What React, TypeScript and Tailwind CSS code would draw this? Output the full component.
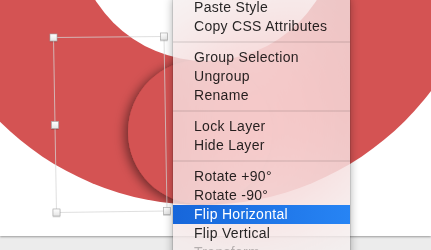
import React from 'react';

type MenuItem = { label: string; active?: boolean; disabled?: boolean } | 'sep';

const items: MenuItem[] = [
  { label: 'Paste Style' },
  { label: 'Copy CSS Attributes' },
  'sep',
  { label: 'Group Selection' },
  { label: 'Ungroup' },
  { label: 'Rename' },
  'sep',
  { label: 'Lock Layer' },
  { label: 'Hide Layer' },
  'sep',
  { label: 'Rotate +90°' },
  { label: 'Rotate -90°' },
  { label: 'Flip Horizontal', active: true },
  { label: 'Flip Vertical' },
  { label: 'Transform', disabled: true },
];

const RED = '#d45353';

// corner / edge handles of the (slightly rotated) selection frame
const handles: [number, number][] = [
  [53.5, 37.5],
  [164, 36.5],
  [55, 125],
  [56.5, 212.5],
  [167, 211],
];

const Artwork = () => (
  <svg width="431" height="236" viewBox="0 0 431 236" className="block">
    <defs>
      <clipPath id="ring">
        <circle cx="202" cy="-82" r="287" />
      </clipPath>
      <filter id="drop" x="-30%" y="-30%" width="160%" height="160%">
        <feDropShadow dx="-3" dy="2" stdDeviation="5.5" floodColor="#000" floodOpacity="0.5" />
      </filter>
      <filter id="hshadow" x="-50%" y="-50%" width="200%" height="200%">
        <feDropShadow dx="0" dy="0.5" stdDeviation="0.6" floodColor="#000" floodOpacity="0.35" />
      </filter>
      <linearGradient id="hfill" x1="0" y1="0" x2="0" y2="1">
        <stop offset="0" stopColor="#ffffff" />
        <stop offset="1" stopColor="#e4e4e4" />
      </linearGradient>
    </defs>

    <circle cx="202" cy="-82" r="287" fill={RED} />
    <g clipPath="url(#ring)">
      <circle cx="200" cy="132" r="72" fill={RED} filter="url(#drop)" />
    </g>
    <circle cx="206" cy="-70" r="131" fill="#fff" />

    {/* selection frame */}
    <polygon
      points="53.5,37.5 164,36.5 167,211 56.5,212.5"
      fill="none"
      stroke="#d4d4d4"
      strokeOpacity="0.75"
      strokeWidth="1"
    />
    {handles.map(([x, y], i) => (
      <rect
        key={i}
        x={x - 3.5}
        y={y - 3.5}
        width="7"
        height="7"
        fill="url(#hfill)"
        stroke="#a8a8a8"
        strokeWidth="0.6"
        filter="url(#hshadow)"
      />
    ))}
  </svg>
);

const ContextMenu = () => (
  <div
    className={
      "absolute left-[173px] top-[-6px] w-[177px] rounded-[5px] pt-[4px] pb-2 " +
      "bg-[#f3f3f3]/70 backdrop-blur-3xl backdrop-saturate-150 " +
      "shadow-[0_3px_10px_rgba(0,0,0,0.35),0_0_0_0.5px_rgba(0,0,0,0.2)] " +
      "font-['Liberation_Sans',Arial,sans-serif] text-[14px] tracking-[0.3px]"
    }
  >
    {items.map((item, i) =>
      item === 'sep' ? (
        <div key={i} className="flex h-[12px] items-center">
          <div className="h-[2px] w-full bg-black/[0.08]" />
        </div>
      ) : (
        <div
          key={i}
          className={
            item.active
              ? 'h-[19px] whitespace-nowrap bg-linear-to-r from-[#1766da] to-[#2784f4] pl-[21px] leading-[19px] text-white'
              : item.disabled
              ? 'h-[19px] whitespace-nowrap pl-[21px] leading-[19px] text-black/25'
              : 'h-[19px] whitespace-nowrap pl-[21px] leading-[19px] text-black/85'
          }
        >
          {item.label}
        </div>
      )
    )}
  </div>
);

export default function App() {
  return (
    <div className="relative flex h-[250px] w-[431px] flex-col overflow-hidden bg-[#ececec]">
      <div className="relative z-0 h-[236px] shrink-0 bg-white shadow-[0_1px_2px_rgba(0,0,0,0.35)]">
        <Artwork />
      </div>
      <ContextMenu />
    </div>
  );
}
